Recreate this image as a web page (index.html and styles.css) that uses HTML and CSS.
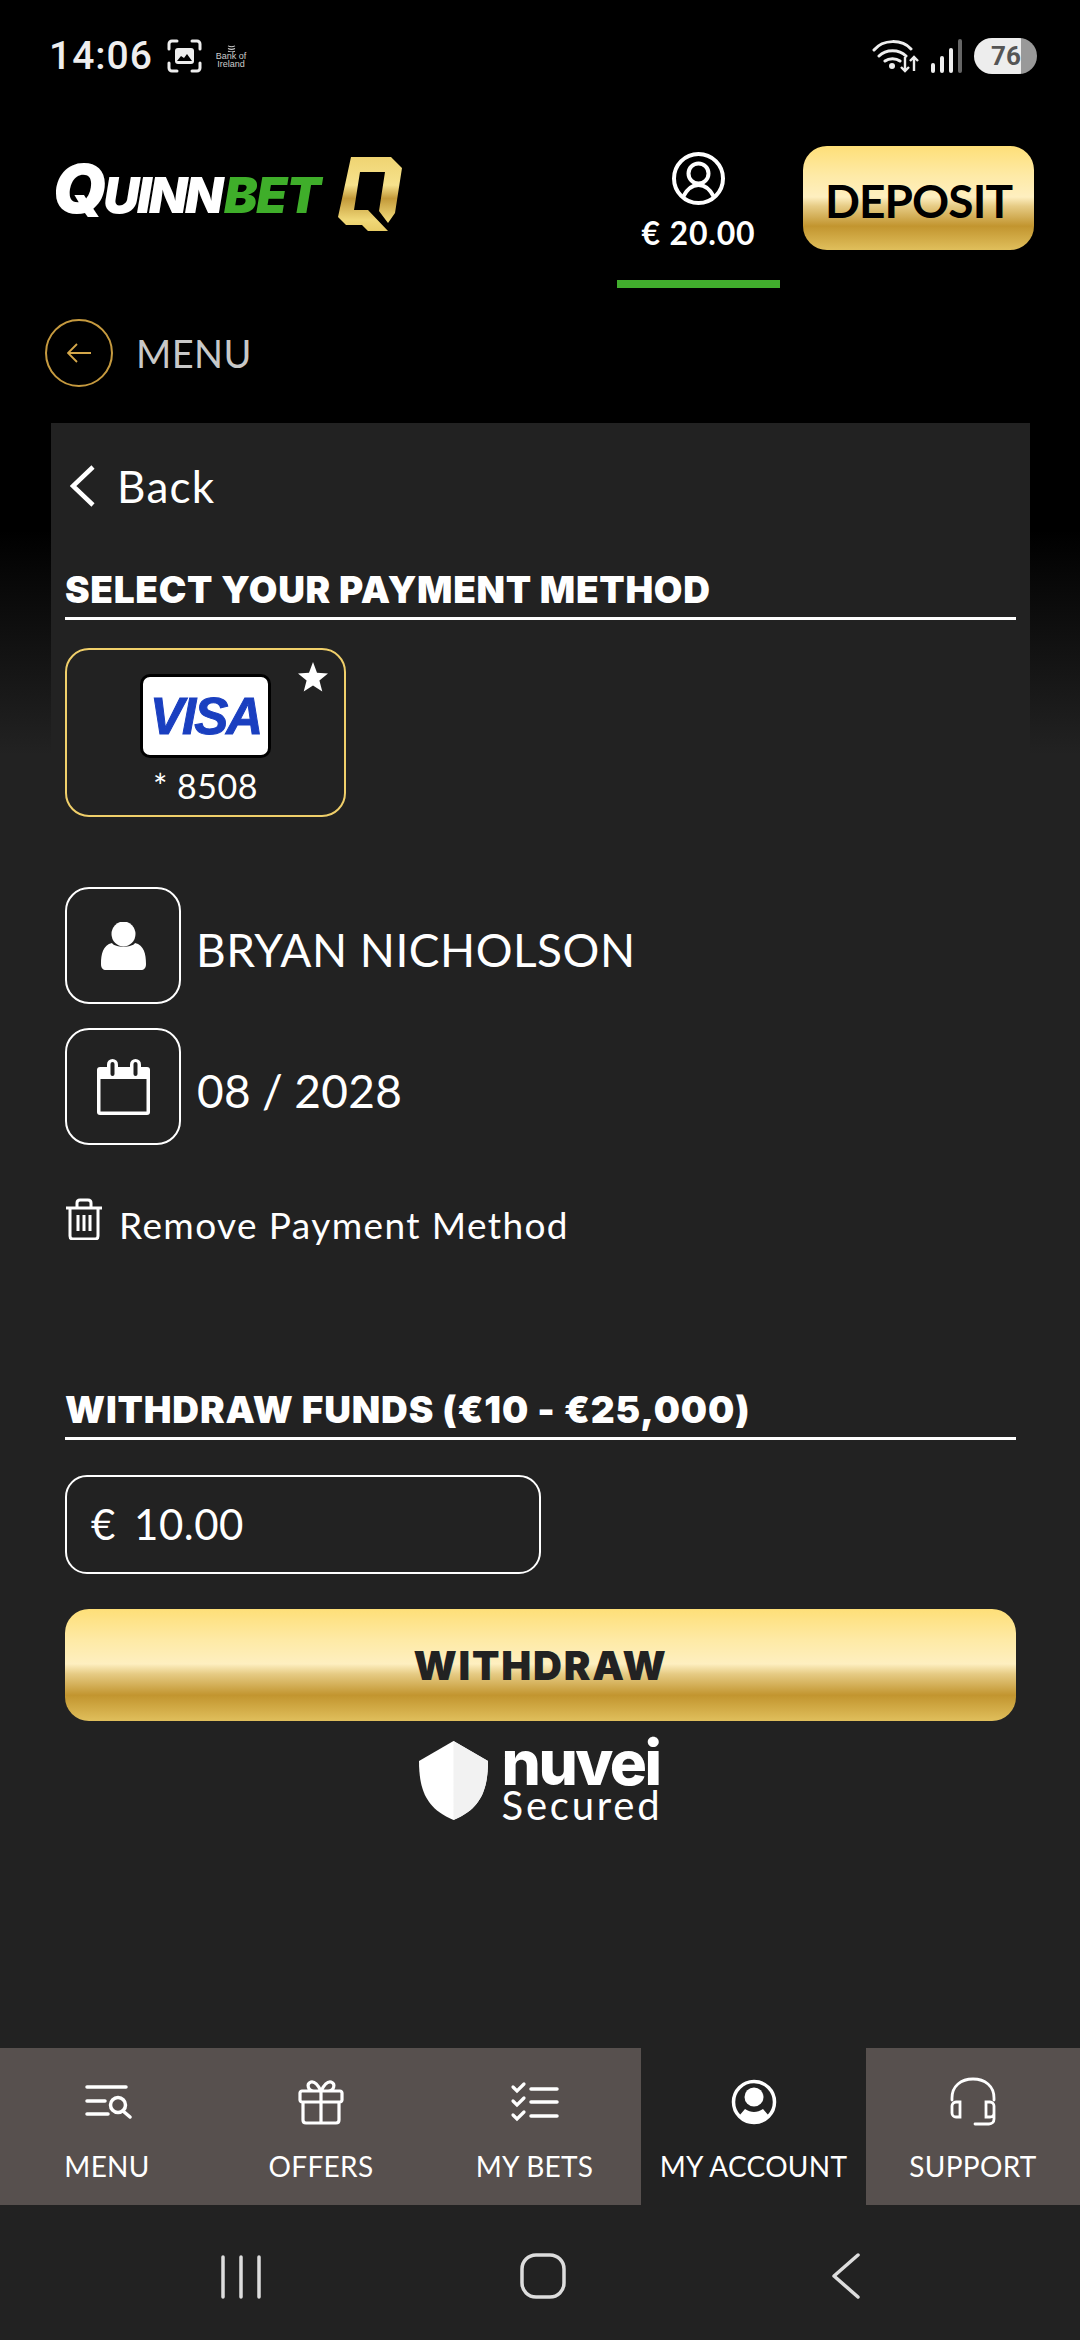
FILE: index.html
```html
<!DOCTYPE html>
<html lang="en">
<head>
<meta charset="utf-8">
<title>QuinnBet - Withdraw</title>
<link rel="stylesheet" href="styles.css">
</head>
<body>
<div class="page">
  <div class="status">
    <span class="time">14:06</span>
    <svg class="shot" viewBox="0 0 35 34"><path d="M2 10V5a3 3 0 0 1 3-3h5M25 2h5a3 3 0 0 1 3 3v5M33 24v5a3 3 0 0 1-3 3h-5M10 32H5a3 3 0 0 1-3-3v-5" fill="none" stroke="#eee" stroke-width="3" stroke-linecap="round"/><rect x="8" y="9" width="19" height="16" rx="3" fill="#eee"/><path d="M10 22l4-5 3 2 3-4 5 7z" fill="#000"/></svg>
    <span class="bank"><svg class="bank-mark" viewBox="0 0 10 8"><path d="M1 1q4 2 8 0M1 4q4 2 8 0M1 7q4 2 8 0" fill="none" stroke="#ccc" stroke-width="1.2"/></svg><span>Bank of</span><span>Ireland</span></span>
    <span class="spacer"></span>
    <svg class="wifi" viewBox="0 0 48 34"><path d="M2 11C11 0 30 0 39 10M7 17c7-7 20-7 27 0M13 22c4-3 11-3 15 0" fill="none" stroke="#eee" stroke-width="3" stroke-linecap="round"/><circle cx="20" cy="27" r="3" fill="#eee"/><path d="M33 18v14M29 28l4 4 4-4M42 32V18M38 22l4-4 4 4" fill="none" stroke="#eee" stroke-width="2.4"/></svg>
    <svg class="signal" viewBox="0 0 32 34"><rect x="0" y="24" width="4" height="10" rx="2" fill="#eee"/><rect x="9" y="17" width="4" height="17" rx="2" fill="#eee"/><rect x="18" y="9" width="4" height="25" rx="2" fill="#eee"/><rect x="27" y="0" width="4" height="34" rx="2" fill="#666"/></svg>
    <span class="battery"><span class="battery-num">76</span></span>
  </div>

  <header class="header">
    <div class="logo">
      <span class="logo-word"><span class="logo-q">Q</span>UINN<span class="logo-bet">BET</span></span>
      <svg class="logo-mark" viewBox="0 0 64 74"><defs><linearGradient id="qg" x1="0" y1="0" x2="0" y2="1"><stop offset="0" stop-color="#efd472"/><stop offset=".38" stop-color="#f6e28c"/><stop offset=".56" stop-color="#c39a3a"/><stop offset=".85" stop-color="#f0d878"/><stop offset="1" stop-color="#e8cc66"/></linearGradient></defs><path d="M13 0H53L64 11 57 56 50 66 41 54 47 15H22L16 53H30L50 74H30L24 68H8L0 60z" fill="url(#qg)"/></svg>
    </div>
    <div class="account">
      <svg class="account-icon" viewBox="0 0 53 53"><circle cx="26.5" cy="26.5" r="24.5" fill="none" stroke="#fff" stroke-width="4"/><circle cx="26.5" cy="21.5" r="10" fill="none" stroke="#fff" stroke-width="4"/><path d="M11 45c4-8 10-12 15.500-12S38 37 42 45" fill="none" stroke="#fff" stroke-width="4"/></svg>
      <span class="balance">€ 20.00</span>
    </div>
    <button class="gold-btn deposit">DEPOSIT</button>
  </header>

  <div class="menu-row">
    <span class="menu-circle"><svg class="menu-arrow" viewBox="0 0 24 20"><path d="M24 10H1M10 1l-9 9 9 9" fill="none" stroke="#d4a74a" stroke-width="1.800"/></svg></span>
    <span class="menu-text">MENU</span>
  </div>

  <main class="panel">
    <div class="back">
      <svg class="back-icon" viewBox="0 0 25 42"><path d="M23 2L3 21l20 19" fill="none" stroke="#fff" stroke-width="4.500"/></svg>
      <span>Back</span>
    </div>

    <h2 class="title title-first">SELECT YOUR PAYMENT METHOD</h2>

    <div class="card">
      <svg class="star" viewBox="0 0 30 30"><path d="M15 0l4 10.800 11 .6-8.600 7 2.900 11L15 23.400 5.700 29.400l2.900-11L0 11.400l11-.6z" fill="#fff"/></svg>
      <div class="visa"><span class="visa-text">VISA</span></div>
      <div class="card-num">* 8508</div>
    </div>

    <div class="info-row">
      <span class="info-box"><svg class="person" viewBox="0 0 45 48"><ellipse cx="22.500" cy="12" rx="12" ry="12.500" fill="#fff"/><path d="M0 42c0-10 2-19 11-21 3 5 20 5 23 0 9 2 11 11 11 21 0 4-2 6-5 6H5c-3 0-5-2-5-6z" fill="#fff"/></svg></span>
      <span class="info-text">BRYAN NICHOLSON</span>
    </div>
    <div class="info-row info-row-next">
      <span class="info-box"><svg class="calendar" viewBox="0 0 53 56"><rect x="0" y="8" width="53" height="48" rx="3" fill="#fff"/><rect x="3.500" y="20" width="46" height="32.500" fill="#222"/><rect x="10" y="0" width="11" height="17" rx="5.500" fill="#fff"/><rect x="33" y="0" width="11" height="17" rx="5.500" fill="#fff"/><rect x="13.500" y="3" width="4" height="14" rx="2" fill="#222"/><rect x="36.500" y="3" width="4" height="14" rx="2" fill="#222"/></svg></span>
      <span class="info-text info-date">08 / 2028</span>
    </div>

    <div class="remove">
      <svg class="trash" viewBox="0 0 38 42"><path d="M1 10h36M12 10V5c0-2 1-3 3-3h8c2 0 3 1 3 3v5M5 10v28c0 2 1 3 3 3h22c2 0 3-1 3-3V10M13 17v16M19 17v16M25 17v16" fill="none" stroke="#fff" stroke-width="3"/></svg>
      <span>Remove Payment Method</span>
    </div>

    <h2 class="title title-second">WITHDRAW FUNDS (€10 - €25,000)</h2>

    <div class="amount">€ 10.00</div>

    <button class="gold-btn withdraw">WITHDRAW</button>

    <div class="nuvei">
      <svg class="shield" viewBox="0 0 69 79"><path d="M34.500 0L69 20c0 30-8 48-34.500 59C8 68 0 50 0 20z" fill="#fff"/><path d="M34.500 0L69 20c0 30-8 48-34.500 59z" fill="#f2f2f2"/></svg>
      <div class="nuvei-text"><span class="nuvei-name">nuvei</span><span class="nuvei-sub">Secured</span></div>
    </div>
  </main>

  <nav class="tabs">
    <div class="tab">
      <svg class="tab-icon" viewBox="0 0 50 50"><path d="M5 11h39M5 25h18M5 38h21" fill="none" stroke="#fff" stroke-width="3.500" stroke-linecap="round"/><circle cx="36" cy="29" r="7.500" fill="none" stroke="#fff" stroke-width="3.500"/><path d="M41 35l7 6" stroke="#fff" stroke-width="3.500" stroke-linecap="round"/></svg>
      <span class="tab-label">MENU</span>
    </div>
    <div class="tab">
      <svg class="tab-icon" viewBox="0 0 50 50"><path d="M6 15h38c1 0 2 1 2 2v7c0 1-1 2-2 2H6c-1 0-2-1-2-2v-7c0-1 1-2 2-2zM7 26v18c0 2 1 3 3 3h30c2 0 3-1 3-3V26M25 15v32M25 15c-3-6-6-10-10-9-5 2-3 9 3 9M25 15c3-6 6-10 10-9 5 2 3 9-3 9" fill="none" stroke="#fff" stroke-width="3.200"/></svg>
      <span class="tab-label">OFFERS</span>
    </div>
    <div class="tab">
      <svg class="tab-icon" viewBox="0 0 50 50"><path d="M3 11l4 4 7-7M3 25l4 4 7-7M3 39l4 4 7-7" fill="none" stroke="#fff" stroke-width="3.200" stroke-linecap="round"/><path d="M21 13h26M21 26h26M21 40h26" stroke="#fff" stroke-width="3.500" stroke-linecap="round"/></svg>
      <span class="tab-label">MY BETS</span>
    </div>
    <div class="tab tab-active">
      <svg class="tab-icon" viewBox="0 0 50 50"><circle cx="25" cy="26" r="20.500" fill="none" stroke="#fff" stroke-width="3.500"/><circle cx="25" cy="21" r="9.500" fill="#fff"/><path d="M10 40l6-7c6 4 12 4 18 0l6 7c-9 8-21 8-30 0z" fill="#fff"/></svg>
      <span class="tab-label">MY ACCOUNT</span>
    </div>
    <div class="tab">
      <svg class="tab-icon" viewBox="0 0 50 50"><path d="M4 24V22C4 10 13 3 25 3s21 7 21 19v2M12 26H8a4 4 0 0 0-4 4v7a4 4 0 0 0 4 4h4zM38 26h4a4 4 0 0 1 4 4v7a4 4 0 0 1-4 4h-4zM46 37v6c0 3-2 5-5 5H27" fill="none" stroke="#fff" stroke-width="2.800" stroke-linecap="round"/></svg>
      <span class="tab-label">SUPPORT</span>
    </div>
  </nav>

  <div class="sysnav">
    <svg class="sys-recent" viewBox="0 0 40 44"><path d="M2 2v40M20 2v40M38 2v40" stroke="#ddd" stroke-width="3.500" stroke-linecap="round"/></svg>
    <svg class="sys-home" viewBox="0 0 46 46"><rect x="2" y="2" width="42" height="42" rx="14" fill="none" stroke="#ddd" stroke-width="3.500"/></svg>
    <svg class="sys-back" viewBox="0 0 28 46"><path d="M26 2L2 23l24 21" fill="none" stroke="#ddd" stroke-width="3.500" stroke-linecap="round" stroke-linejoin="round"/></svg>
  </div>
</div>
</body>
</html>
```
FILE: styles.css
```css
* { box-sizing: border-box; }
html, body { margin: 0; padding: 0; }
body { font-family: "Lato", "Liberation Sans", sans-serif; color: #fff; }

.page {
  width: 1080px;
  height: 2340px;
  display: flex;
  flex-direction: column;
  overflow: hidden;
  background: linear-gradient(180deg, #000 0, #000 530px, #222 755px, #222 100%);
}

/* status bar */
.status {
  height: 112px;
  flex: none;
  display: flex;
  align-items: flex-start;
  padding: 38px 43px 0 49px;
}
.time { font-family: "Roboto", sans-serif; font-size: 39px; font-weight: 500; line-height: 36px; letter-spacing: 1px; color: #eee; width: 118px; }
.shot { width: 35px; height: 34px; margin-top: 1px; }
.bank { margin: 7px 0 0 14px; width: 30px; display: flex; flex-direction: column; align-items: center; font-family: "Liberation Sans", sans-serif; font-size: 9px; line-height: 8px; color: #ccc; white-space: nowrap; }
.bank-mark { width: 9px; height: 7px; }
.spacer { flex: 1; }
.wifi { width: 48px; height: 34px; margin-top: 1px; }
.signal { width: 32px; height: 34px; margin: 1px 11px 0 11px; }
.battery { width: 63px; height: 36px; border-radius: 18px; background: linear-gradient(90deg, #ededed 0, #ededed 47px, #999 47px); display: flex; align-items: center; padding-left: 17px; }
.battery-num { font-family: "Roboto", sans-serif; font-size: 26px; font-weight: 700; color: #555; }

/* header */
.header {
  height: 176px;
  flex: none;
  display: flex;
  align-items: flex-start;
  padding-left: 53px;
}
.logo { display: flex; align-items: flex-start; margin-top: 45px; width: 564px; }
.logo-word { font-family: "Inter", sans-serif; font-weight: 900; font-style: italic; font-size: 50px; line-height: 62px; letter-spacing: -2.500px; width: 285px; white-space: nowrap; }
.logo-q { font-size: 68px; }
.logo-bet { color: #3fae2a; margin-left: 3px; letter-spacing: -1px; }
.logo-mark { width: 64px; height: 74px; flex: none; }
.account { width: 163px; height: 176px; display: flex; flex-direction: column; align-items: center; padding-top: 40px; border-bottom: 8px solid #41ad2d; }
.account-icon { width: 53px; height: 53px; flex: none; }
.balance { font-size: 32px; font-weight: 700; line-height: 34px; margin-top: 11px; letter-spacing: .8px; white-space: nowrap; }

.gold-btn {
  border: 0;
  padding: 0;
  font-family: "Lato", sans-serif;
  cursor: pointer;
  background: linear-gradient(180deg, #fedf78 0, #feeaa6 28%, #feefc0 49%, #e6cb84 58%, #c2952f 77%, #e0bf5c 100%);
}
.deposit { width: 231px; height: 104px; margin: 34px 0 0 23px; border-radius: 24px; font-size: 46px; font-weight: 700; color: #000; letter-spacing: -.9px; padding-top: 4px; }

/* menu row */
.menu-row { height: 135px; flex: none; display: flex; align-items: flex-start; padding: 31px 0 0 45px; }
.menu-circle { width: 68px; height: 68px; border-radius: 50%; border: 2px solid #c69a3f; display: flex; align-items: center; justify-content: center; }
.menu-arrow { width: 24px; height: 20px; }
.menu-text { font-size: 38px; font-weight: 400; line-height: 68px; margin-left: 23px; color: #c8c8c8; letter-spacing: .4px; }

/* panel */
.panel { flex: 1; margin: 0 50px 0 51px; background: #222; padding: 42px 14px 0; display: flex; flex-direction: column; align-items: flex-start; }
.back { display: flex; align-items: center; height: 42px; gap: 22px; margin-left: 5px; font-size: 44px; font-weight: 400; letter-spacing: 1.300px; }
.back-icon { width: 25px; height: 42px; }

.title { align-self: stretch; margin: 0; font-family: "Inter", sans-serif; font-size: 37px; font-weight: 900; line-height: 44px; border-bottom: 3px solid #fff; white-space: nowrap; }
.title-first { margin-top: 61px; padding-bottom: 5px; letter-spacing: .7px; }
.title-second { margin-top: 148px; padding-bottom: 5px; letter-spacing: .85px; }

.card { position: relative; width: 281px; height: 169px; margin-top: 28px; border: 2px solid #f0cf6a; border-radius: 24px; display: flex; flex-direction: column; align-items: center; padding-top: 24px; }
.star { position: absolute; top: 12px; right: 16px; width: 30px; height: 30px; }
.visa { width: 131px; height: 84px; background: #fff; border: 3px solid #000; border-radius: 10px; display: flex; align-items: center; justify-content: center; }
.visa-text { font-family: "Liberation Sans", sans-serif; font-style: italic; font-weight: 700; font-size: 51px; line-height: 1; color: #1a3fc0; letter-spacing: -2px; -webkit-text-stroke: 1px #1a3fc0; }
.card-num { font-size: 34px; font-weight: 400; line-height: 40px; margin-top: 8px; letter-spacing: .5px; }

.info-row { display: flex; align-items: center; margin-top: 70px; }
.info-row-next { margin-top: 24px; }
.info-box { width: 116px; height: 117px; border: 2px solid #fff; border-radius: 24px; display: flex; align-items: center; justify-content: center; flex: none; }
.person { width: 45px; height: 48px; }
.calendar { width: 53px; height: 56px; }
.info-text { margin-left: 15px; padding-top: 8px; font-size: 46px; font-weight: 400; letter-spacing: .5px; white-space: nowrap; }
.info-date { margin-left: 16px; word-spacing: -1px; letter-spacing: .3px; }

.remove { display: flex; align-items: flex-end; gap: 16px; margin-top: 53px; font-size: 37px; font-weight: 400; line-height: 30px; letter-spacing: 1.400px; }
.trash { width: 38px; height: 42px; }

.amount { width: 476px; height: 99px; margin-top: 35px; border: 2px solid #fff; border-radius: 22px; padding: 0 0 2px 24px; display: flex; align-items: center; font-size: 42px; font-weight: 400; word-spacing: 7px; letter-spacing: .5px; }

.withdraw { align-self: stretch; height: 112px; margin-top: 35px; border-radius: 24px; font-family: "Inter", sans-serif; font-size: 40px; font-weight: 900; color: #222; letter-spacing: 1.800px; }

.nuvei { align-self: center; display: flex; align-items: flex-start; gap: 14px; margin-top: 16px; }
.shield { width: 69px; height: 79px; margin-top: 4px; }
.nuvei-text { display: flex; flex-direction: column; }
.nuvei-name { font-family: "Inter", sans-serif; font-size: 62px; font-weight: 800; line-height: 52px; letter-spacing: -2.500px; }
.nuvei-sub { font-size: 40px; line-height: 32px; font-weight: 400; letter-spacing: 2.800px; white-space: nowrap; }

/* tabs */
.tabs { height: 157px; flex: none; display: grid; grid-template-columns: 214px 214px 213px 225px 214px; background: #57504e; }
.tab { display: flex; flex-direction: column; align-items: center; padding-top: 28px; }
.tab-active { background: #222; }
.tab-icon { width: 50px; height: 50px; flex: none; }
.tab-label { font-size: 28px; font-weight: 400; line-height: 34px; margin-top: 23px; white-space: nowrap; letter-spacing: .3px; }

/* system nav */
.sysnav { height: 135px; flex: none; background: #222; display: flex; }
.sys-recent { width: 40px; height: 44px; margin: 50px 0 0 221px; }
.sys-home { width: 46px; height: 46px; margin: 48px 0 0 259px; }
.sys-back { width: 28px; height: 46px; margin: 48px 0 0 266px; }
```
